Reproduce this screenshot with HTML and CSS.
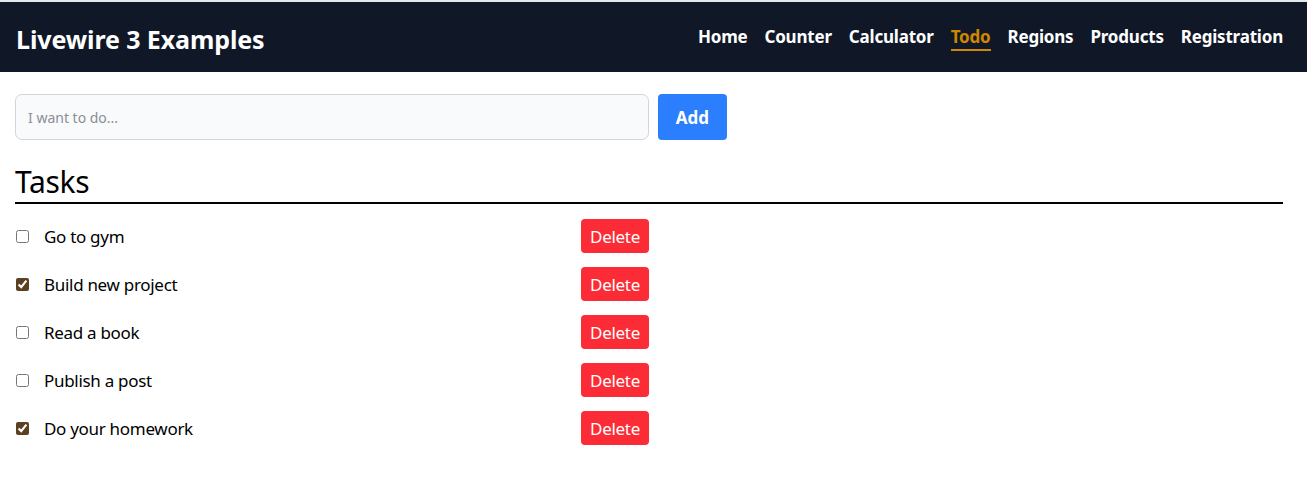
FILE: index.html
```html
<!DOCTYPE html>
<html lang="en">
<head>
<meta charset="utf-8">
<title>Livewire 3 Examples - Todo</title>
<link rel="stylesheet" href="styles.css">
</head>
<body>
<div class="topline"></div>
<header class="navbar">
  <div class="brand">Livewire 3 Examples</div>
  <nav class="nav">
    <a href="#" class="nav-link">Home</a>
    <a href="#" class="nav-link">Counter</a>
    <a href="#" class="nav-link">Calculator</a>
    <a href="#" class="nav-link active">Todo</a>
    <a href="#" class="nav-link">Regions</a>
    <a href="#" class="nav-link">Products</a>
    <a href="#" class="nav-link">Registration</a>
  </nav>
</header>
<main class="main">
  <form class="add-form">
    <input class="todo-input" type="text" placeholder="I want to do...">
    <button type="button" class="btn-add">Add</button>
  </form>
  <h2 class="tasks-title">Tasks</h2>
  <ul class="task-list">
    <li class="task"><label class="task-label"><input type="checkbox" class="task-check"><span>Go to gym</span></label><button type="button" class="btn-delete">Delete</button></li>
    <li class="task"><label class="task-label"><input type="checkbox" class="task-check" checked><span>Build new project</span></label><button type="button" class="btn-delete">Delete</button></li>
    <li class="task"><label class="task-label"><input type="checkbox" class="task-check"><span>Read a book</span></label><button type="button" class="btn-delete">Delete</button></li>
    <li class="task"><label class="task-label"><input type="checkbox" class="task-check"><span>Publish a post</span></label><button type="button" class="btn-delete">Delete</button></li>
    <li class="task"><label class="task-label"><input type="checkbox" class="task-check" checked><span>Do your homework</span></label><button type="button" class="btn-delete">Delete</button></li>
  </ul>
</main>
</body>
</html>
```

FILE: styles.css
```css
* { box-sizing: border-box; }
html, body { margin: 0; padding: 0; background: #ffffff; }
body {
  font-family: "Noto Sans", "Open Sans", Arial, sans-serif;
  color: #000;
}
.topline { height: 2px; background: #e5e7eb; }
.navbar {
  height: 70px;
  background: #101828;
  display: flex;
  align-items: center;
  justify-content: space-between;
  padding: 0 24px 0 16px;
}
.brand {
  color: #ffffff;
  font-size: 25px;
  font-weight: 700;
  letter-spacing: -0.1px;
  margin-top: 3px;
}
.nav {
  display: flex;
  gap: 17px;
  margin-top: 2px;
}
.nav-link {
  color: #ffffff;
  font-size: 17px;
  font-weight: 700;
  text-decoration: none;
  letter-spacing: -0.2px;
  padding-bottom: 1px;
  border-bottom: 2px solid transparent;
}
.nav-link.active {
  color: #d08700;
  border-bottom-color: #d08700;
}
.main { padding: 22px 24px 0 15px; }
.add-form { display: flex; gap: 9px; }
.todo-input {
  width: 634px;
  height: 46px;
  background: #f9fafb;
  border: 1px solid #d1d5dc;
  border-radius: 7px;
  padding: 0 12px;
  font-family: inherit;
  font-size: 14px;
  color: #101828;
  outline: none;
}
.todo-input::placeholder { color: #8a8f98; }
.btn-add {
  width: 69px;
  height: 46px;
  background: #2b7fff;
  color: #fff;
  border: none;
  border-radius: 4px;
  font-family: inherit;
  font-size: 17px;
  font-weight: 700;
}
.tasks-title {
  margin: 22px 0 0;
  font-size: 30px;
  font-weight: 400;
  line-height: 40px;
  letter-spacing: -0.3px;
  border-bottom: 2px solid #000;
  padding-bottom: 0;
}
.task-list { list-style: none; margin: 8px 0 0; padding: 0; }
.task {
  display: flex;
  align-items: center;
  height: 48px;
}
.task-label {
  width: 566px;
  display: flex;
  align-items: center;
  font-size: 17px;
  letter-spacing: -0.3px;
}
.task-check {
  width: 13px;
  height: 13px;
  margin: 0 15px 0 1px;
  accent-color: #5a4122;
}
.btn-delete {
  width: 68px;
  height: 34px;
  background: #fb2c36;
  color: #fff;
  border: none;
  border-radius: 4px;
  font-family: inherit;
  font-size: 17px;
  letter-spacing: -0.3px;
  padding: 0;
}
```
